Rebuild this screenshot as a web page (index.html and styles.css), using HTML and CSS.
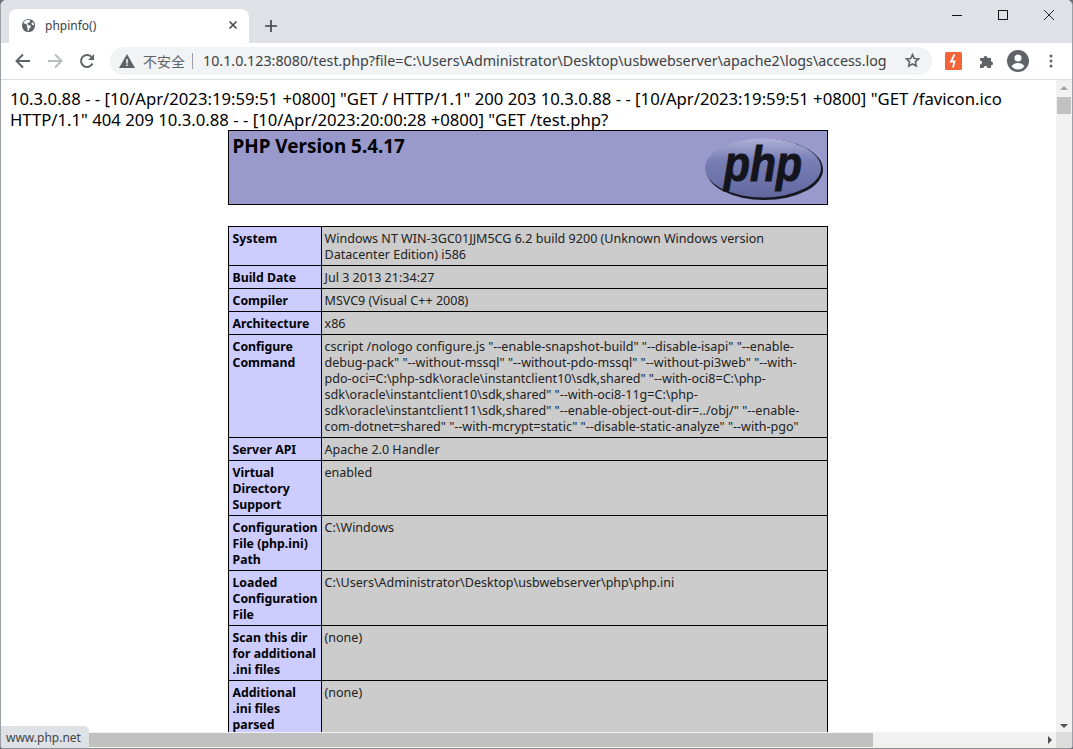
FILE: index.html
```html
<!DOCTYPE html>
<html lang="zh">
<head>
<meta charset="utf-8">
<title>phpinfo()</title>
<link rel="stylesheet" href="styles.css">
</head>
<body>
<div class="window">
  <header class="tabstrip">
    <div class="tab">
      <svg class="favicon" viewBox="0 0 16 16" width="16" height="16"><circle cx="8" cy="8" r="7" fill="#5f6368"/><path d="M2.5 5.5 5 6l2 2-1 1.5 1 1v3h1.2l.6-2.3 2-1.6-.8-1.6-2.2-.5L6.6 6l1-1 1.6-.3.4-2.2-2-.6-3.4 1z" fill="#fff"/><path d="M12.5 4.5 11 5.6l1 1.9 1.8.3-.3-2z" fill="#fff"/></svg>
      <span class="tab-title">phpinfo()</span>
      <svg class="tab-close" viewBox="0 0 10 10" width="10" height="10"><path d="M1.5 1.5l7 7M8.500 1.500l-7 7" stroke="#45484c" stroke-width="1.6" fill="none"/></svg>
    </div>
    <svg class="newtab" viewBox="0 0 12 12" width="12" height="12"><path d="M6 0v12M0 6h12" stroke="#3c4043" stroke-width="1.6" fill="none"/></svg>
    <div class="winctl">
      <svg viewBox="0 0 10 10" width="10" height="10"><path d="M0 5.500h10" stroke="#111" fill="none"/></svg>
      <svg viewBox="0 0 10 10" width="10" height="10"><rect x=".5" y=".5" width="9" height="9" stroke="#111" fill="none"/></svg>
      <svg viewBox="0 0 10 10" width="10" height="10"><path d="M0 0l10 10M10 0L0 10" stroke="#111" stroke-width=".9" fill="none"/></svg>
    </div>
  </header>
  <nav class="toolbar">
    <svg class="navbtn" viewBox="0 0 16 16" width="16" height="16"><path d="M15 8H2M8 1.500 1.500 8 8 14.500" stroke="#5f6368" stroke-width="2" fill="none"/></svg>
    <svg class="navbtn" viewBox="0 0 16 16" width="16" height="16"><path d="M1 8h13M8 1.500 14.500 8 8 14.500" stroke="#b9bbbd" stroke-width="2" fill="none"/></svg>
    <svg class="navbtn" viewBox="0 0 16 16" width="16" height="16"><path d="M13.500 10.500A6 6 0 1 1 12.300 3.700" stroke="#5f6368" stroke-width="2" fill="none"/><path d="M15 1v6H9z" fill="#5f6368"/></svg>
    <div class="omnibox">
      <svg class="warn" viewBox="0 0 16 14" width="16" height="14"><path d="M8 0l8 14H0z" fill="#5f6368"/><path d="M7.200 5h1.600v4.500H7.200zM7.200 10.500h1.600V12H7.200z" fill="#f1f3f4"/></svg>
      <span class="insecure">不安全</span>
      <span class="sep"></span>
      <span class="url">10.1.0.123:8080/test.php?file=C:\Users\Administrator\Desktop\usbwebserver\apache2\logs\access.log</span>
      <svg class="star" viewBox="0 0 16 16" width="15" height="15"><path d="M8 1.800l1.900 4.100 4.500.5-3.300 3 .9 4.500L8 11.700l-4 2.200.9-4.500-3.300-3 4.500-.5z" stroke="#5f6368" stroke-width="1.700" fill="none"/></svg>
    </div>
    <div class="tools">
      <svg class="ext" viewBox="0 0 17 18" width="17" height="18"><rect width="17" height="18" rx="1.500" fill="#f4633a"/><path d="M9.500 2.500 6 9.500h3.500L8 15.500" stroke="#fff" stroke-width="1.800" fill="none"/></svg>
      <svg class="puzzle" viewBox="0 0 16 16" width="16" height="16"><path d="M1 5h3.500a2 2 0 1 1 4 0H12v3.500a2 2 0 1 1 0 4V15H8.500a2 2 0 1 0-4 0H1v-3.500a2 2 0 1 0 0-4z" fill="#5f6368"/></svg>
      <svg class="avatar" viewBox="0 0 22 22" width="22" height="22"><circle cx="11" cy="11" r="11" fill="#5f6368"/><circle cx="11" cy="8" r="3.500" fill="#fff"/><path d="M4.500 16.500c1.500-2.800 4-3.500 6.500-3.500s5 .7 6.500 3.500a8.600 8.600 0 0 1-13 0z" fill="#fff"/></svg>
      <svg class="dots" viewBox="0 0 4 14" width="4" height="14"><circle cx="2" cy="2" r="1.500" fill="#5f6368"/><circle cx="2" cy="7" r="1.500" fill="#5f6368"/><circle cx="2" cy="12" r="1.500" fill="#5f6368"/></svg>
    </div>
  </nav>
  <div class="viewport">
    <main class="page">
      <p class="log">10.3.0.88 - - [10/Apr/2023:19:59:51 +0800] "GET / HTTP/1.1" 200 203 10.3.0.88 - - [10/Apr/2023:19:59:51 +0800] "GET /favicon.ico<br>HTTP/1.1" 404 209 10.3.0.88 - - [10/Apr/2023:20:00:28 +0800] "GET /test.php?</p>
      <table class="info head-table">
        <tr><td class="h">
          <svg class="logo" viewBox="0 0 120 64" width="120" height="64">
            <defs>
              <linearGradient id="lg" x1="0" y1="0" x2="0" y2="1"><stop offset="0" stop-color="#aeb1d6"/><stop offset=".35" stop-color="#7a80b6"/><stop offset="1" stop-color="#6068a0"/></linearGradient>
            </defs>
            <ellipse cx="60.500" cy="32.500" rx="58.500" ry="30.500" fill="#17171f"/>
            <ellipse cx="59" cy="31" rx="58" ry="29.500" fill="url(#lg)"/>
            <text class="logo-text" x="59" y="44" text-anchor="middle" textLength="78" lengthAdjust="spacingAndGlyphs">php</text>
          </svg>
          <h1>PHP Version 5.4.17</h1>
        </td></tr>
      </table>
      <br>
      <table class="info">
        <tr><td class="e">System</td><td class="v">Windows NT WIN-3GC01JJM5CG 6.2 build 9200 (Unknown Windows version<br>Datacenter Edition) i586</td></tr>
        <tr><td class="e">Build Date</td><td class="v">Jul 3 2013 21:34:27</td></tr>
        <tr><td class="e">Compiler</td><td class="v">MSVC9 (Visual C++ 2008)</td></tr>
        <tr><td class="e">Architecture</td><td class="v">x86</td></tr>
        <tr><td class="e">Configure<br>Command</td><td class="v">cscript /nologo configure.js "--enable-snapshot-build" "--disable-isapi" "--enable-<br>debug-pack" "--without-mssql" "--without-pdo-mssql" "--without-pi3web" "--with-<br>pdo-oci=C:\php-sdk\oracle\instantclient10\sdk,shared" "--with-oci8=C:\php-<br>sdk\oracle\instantclient10\sdk,shared" "--with-oci8-11g=C:\php-<br>sdk\oracle\instantclient11\sdk,shared" "--enable-object-out-dir=../obj/" "--enable-<br>com-dotnet=shared" "--with-mcrypt=static" "--disable-static-analyze" "--with-pgo"</td></tr>
        <tr><td class="e">Server API</td><td class="v">Apache 2.0 Handler</td></tr>
        <tr><td class="e">Virtual<br>Directory<br>Support</td><td class="v">enabled</td></tr>
        <tr><td class="e">Configuration<br>File (php.ini)<br>Path</td><td class="v">C:\Windows</td></tr>
        <tr><td class="e">Loaded<br>Configuration<br>File</td><td class="v">C:\Users\Administrator\Desktop\usbwebserver\php\php.ini</td></tr>
        <tr><td class="e">Scan this dir<br>for additional<br>.ini files</td><td class="v">(none)</td></tr>
        <tr><td class="e">Additional<br>.ini files<br>parsed</td><td class="v">(none)</td></tr>
      </table>
    </main>
    <aside class="vscroll">
      <span class="arrow-up"></span>
      <span class="vthumb"></span>
      <span class="arrow-down"></span>
    </aside>
  </div>
  <div class="hbar">
    <div class="htrack"><span class="hthumb"></span><span class="arrow-right"></span></div>
    <span class="corner"></span>
    <div class="status">www.php.net</div>
  </div>
</div>
</body>
</html>
```
FILE: styles.css
```css
* { box-sizing: border-box; }
html, body { margin: 0; height: 100%; overflow: hidden; background: #6b6f73; }
.window {
  width: 1073px; height: 749px;
  display: flex; flex-direction: column;
  background: #fff;
  border-radius: 6px 6px 4px 4px;
  border-left: 1px solid #9aa0a6;
  border-right: 1px solid #9aa0a6;
  border-bottom: 1px solid #8d9195;
  overflow: hidden;
  font-family: "Noto Sans", sans-serif;
}
.tabstrip {
  height: 43px; flex: none; background: #dee1e6;
  display: flex; align-items: flex-end; padding-left: 8px; position: relative;
}
.tab {
  width: 240px; height: 34px; background: #fff;
  border-radius: 8px 8px 0 0;
  display: flex; align-items: center; padding: 0 0 2px 12px;
}
.favicon { flex: none; width: 15px; height: 15px; }
.tab-title { margin-left: 9px; font-size: 12px; color: #3c4043; flex: 1; }
.tab-close { margin-right: 11px; }
.newtab { margin: 0 0 11px 16px; }
.winctl {
  margin-left: auto; align-self: flex-start;
  display: flex; gap: 36px; padding: 10px 18px 0 0;
}
.toolbar {
  height: 37px; flex: none; background: #fff;
  border-bottom: 1px solid #dadce0;
  display: flex; align-items: center; padding: 0 0 1px 14px;
}
.navbtn { margin-right: 16px; flex: none; }
.omnibox {
  width: 822px; height: 28px; margin-left: -1px; border-radius: 14px;
  background: #f1f3f4; display: flex; align-items: center; padding-left: 9px;
}
.warn { flex: none; }
.insecure { margin-left: 8px; font-size: 14px; color: #5f6368; font-family: "Noto Sans CJK SC", sans-serif; }
.sep { width: 1px; height: 16px; background: #9aa0a6; margin: 0 10px 0 7px; }
.url { font-size: 14.27px; color: #3c4043; white-space: nowrap; flex: 1; font-family: "Noto Sans", sans-serif; }
.star { margin-right: 12px; flex: none; }
.tools { display: flex; align-items: center; margin-left: 13px; }
.puzzle { margin-left: 17px; }
.avatar { margin-left: 12px; }
.dots { margin-left: 20px; }
.viewport { flex: 1; min-height: 0; display: flex; }
.page { flex: 1; min-width: 0; overflow: hidden; padding: 8px 10px 0 8px; line-height: 21px; }
.log { margin: 0 0 0 1px; font-size: 16.7px; line-height: 21px; color: #000; white-space: nowrap; font-family: "Noto Sans", sans-serif; }
.info {
  width: 600px; margin: 0 auto; border-collapse: collapse; table-layout: fixed;
  font-size: 12.55px; line-height: 16px; color: #222;
}
.info td { border: 1px solid #000; padding: 4px 2px 2px 3px; vertical-align: baseline; white-space: nowrap; }
.info .e { width: 93px; background: #ccccff; font-weight: 700; font-size: 12.3px; color: #000; padding-left: 4px; }
.info .v { background: #cccccc; }
.head-table .h { background: #9999cc; height: 74px; padding: 3px 0 3px 4px; color: #000; }
h1 { margin: 0; font-size: 18.9px; line-height: 24px; font-weight: 700; }
.logo { float: right; margin: 3px 3px 0 0; }
.logo-text { font-family: "Liberation Sans", sans-serif; font-weight: 700; font-style: italic; font-size: 50px; fill: #14141c; stroke: #14141c; stroke-width: 1px; }
.vscroll { width: 16px; flex: none; background: #f1f1f1; position: relative; display: flex; flex-direction: column; align-items: center; }
.arrow-up { margin-top: 6px; width: 0; height: 0; border: 4px solid transparent; border-top: 0; border-bottom: 4px solid #a3a3a3; }
.vthumb { width: 14px; height: 17px; margin-top: 7px; background: #c1c1c1; }
.arrow-down { margin-top: auto; margin-bottom: 4px; width: 0; height: 0; border: 4px solid transparent; border-bottom: 0; border-top: 4px solid #505050; }
.hbar { height: 16px; flex: none; display: flex; background: #f1f1f1; position: relative; }
.htrack { flex: 1; display: flex; align-items: center; padding-left: 16px; }
.hthumb { width: 856px; height: 14px; background: #c1c1c1; }
.arrow-right { margin-left: auto; margin-right: 4px; width: 0; height: 0; border: 4px solid transparent; border-right: 0; border-left: 4px solid #505050; }
.corner { width: 16px; background: #dcdcdc; }
.status {
  position: absolute; left: 0; bottom: -1px; height: 23px; width: 88px;
  background: #dee1e6; border-radius: 0 5px 0 0;
  font-size: 12px; line-height: 23px; padding-left: 5px; color: #444;
}
```
